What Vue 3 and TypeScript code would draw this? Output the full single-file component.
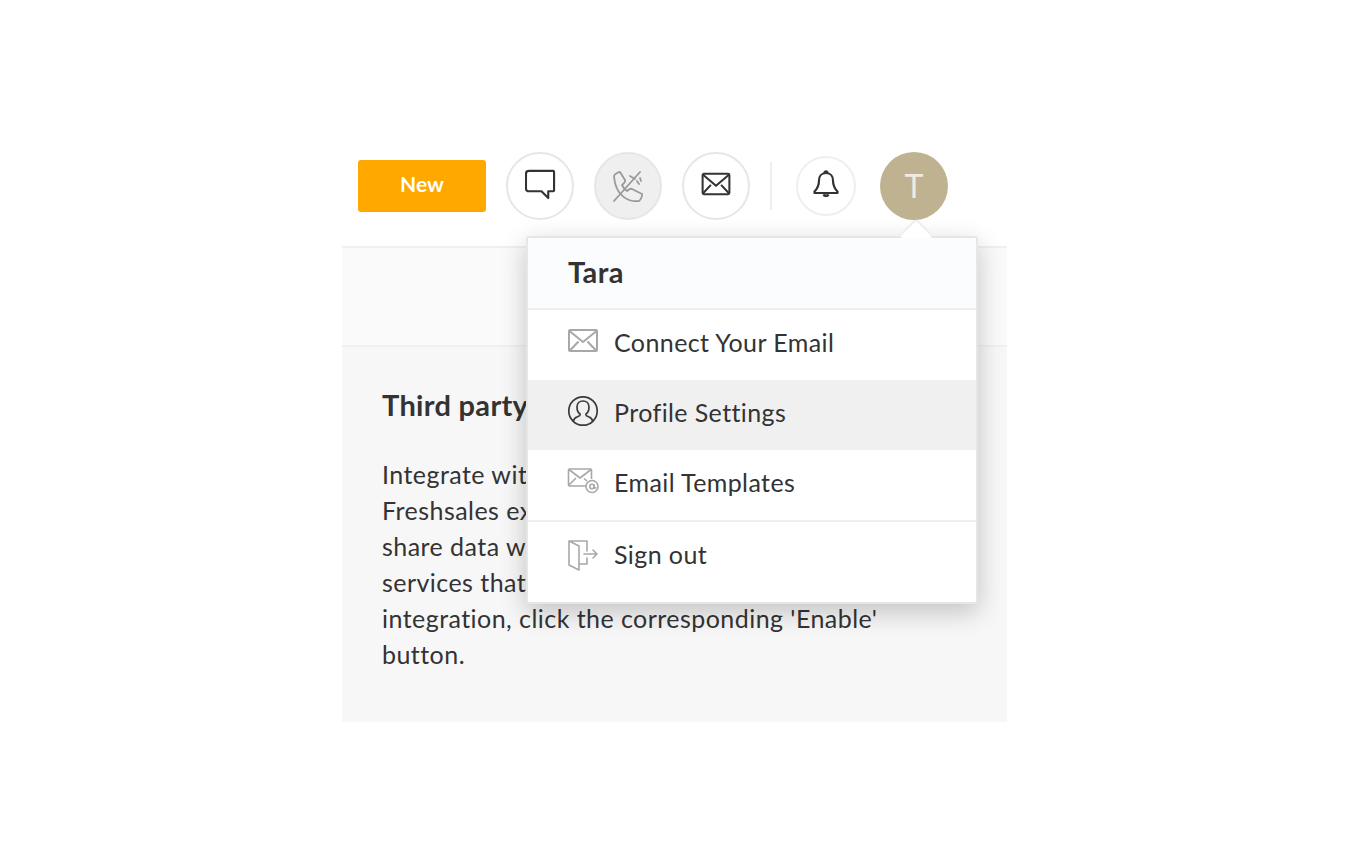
<script setup lang="ts">
const paragraph = [
  'Integrate with third-party apps to extend your',
  'Freshsales experience. These integrations',
  'share data with the tools and external',
  'services that you use. To enable an',
  "integration, click the corresponding 'Enable'",
  'button.',
]
</script>

<template>
  <div class="page">
    <div class="frame">
      <header class="toolbar">
        <button class="btn-new">New</button>
        <span class="circle">
          <svg class="tool-icon" width="31" height="31" viewBox="0 0 32 32" fill="none" stroke="#333" stroke-width="2.2" stroke-linejoin="round">
            <path d="M4 2h25a1 1 0 0 1 1 1v19a1 1 0 0 1-1 1h-5v7l-7-7H4a3 3 0 0 1-3-3V5a3 3 0 0 1 3-3z" />
          </svg>
        </span>
        <span class="circle circle-muted">
          <svg class="phone-icon" width="32" height="32" viewBox="0 0 32 32" fill="none" stroke="#999" stroke-width="1.8" stroke-linejoin="round" stroke-linecap="round">
            <path d="M2 6c0-1.500 4-4 6-4l5 8c.5 1-.5 3-3 5 1 2 3 5 5 6 2-2 4-2.500 5-2l10 5c.5 1-1 6-3 7-3 .5-7 0-10-1-7-3-14-10-15-24z" />
            <path d="M2 31 28 2" />
            <path d="M18 6l5 3M25 11l2 3M28 8l1 3" />
          </svg>
        </span>
        <span class="circle">
          <svg class="tool-icon" width="30" height="24" viewBox="0 0 32 26" fill="none" stroke="#333" stroke-width="2.2" stroke-linejoin="round">
            <rect x="1.500" y="2" width="29" height="22" rx="1.500" />
            <path d="M2 3l14 12L30 3M2 23l8.500-9M30 23l-8.500-9" />
          </svg>
        </span>
        <span class="divider"></span>
        <span class="circle circle-small">
          <svg class="tool-icon" width="26" height="28" viewBox="0 0 26 28" fill="none" stroke="#333" stroke-width="2.2" stroke-linejoin="round">
            <path d="M13 3c-4.500 0-7 3.500-7 7.500 0 5-1.500 8-4.500 11v1.500h23v-1.500c-3-3-4.500-6-4.500-11C20 6.500 17.500 3 13 3z" />
            <path d="M11.500 3c0-2.200 3-2.200 3 0" />
            <path d="M10.500 24.500c.8 2 4.200 2 5 0" fill="#333" />
          </svg>
        </span>
        <span class="avatar">T</span>
      </header>

      <div class="stripe"></div>

      <section class="content">
        <h2 class="title">Third party integrations</h2>
        <p class="text">
          <span v-for="line in paragraph" :key="line" class="line">{{ line }}</span>
        </p>
      </section>

      <div class="menu">
        <span class="caret"></span>
        <div class="menu-head">Tara</div>
        <div class="menu-row">
          <svg class="menu-icon" width="32" height="26" viewBox="0 0 32 26" fill="none" stroke="#a8a8a8" stroke-width="2" stroke-linejoin="round">
            <rect x="2" y="2" width="28" height="21" rx="1" />
            <path d="M2.500 3 16 14 29.500 3M3 22.500l8.500-9M29 22.500l-8.500-9" />
          </svg>
          <span>Connect Your Email</span>
        </div>
        <div class="menu-row is-active">
          <svg class="menu-icon" width="32" height="32" viewBox="0 0 32 32" fill="none" stroke="#3a3a3a" stroke-width="1.7" stroke-linejoin="round" stroke-linecap="round">
            <circle cx="16" cy="16" r="14.200" />
            <path d="M6.500 26c.3-2.500 2-3.500 4-4.200 1.500-.6 2.700-1.100 2.700-2.600-2-1.500-3.200-4-3.200-7C10 8.500 12.500 6 16 6s6 2.500 6 6.200c0 3-1.200 5.500-3.200 7 0 1.500 1.200 2 2.700 2.600 2 .7 3.700 1.700 4 4.200" />
          </svg>
          <span>Profile Settings</span>
        </div>
        <div class="menu-row">
          <svg class="menu-icon" width="32" height="26" viewBox="0 0 32 26" fill="none" stroke="#a8a8a8" stroke-width="1.6" stroke-linejoin="round">
            <path d="M19 18H2.500a1 1 0 0 1-1-1V2a1 1 0 0 1 1-1h21a1 1 0 0 1 1 1v9" />
            <path d="M2 1.500 13 10l11-8.500M2 17l7-7M17 10.500l3 2.500" />
            <circle cx="25" cy="18.500" r="6" />
            <circle cx="25" cy="18.500" r="2.200" />
            <path d="M27.200 16.500v3c0 1 1.500 1 1.500-.5" />
          </svg>
          <span>Email Templates</span>
        </div>
        <div class="menu-row menu-row-last">
          <svg class="menu-icon" width="32" height="32" viewBox="0 0 32 32" fill="none" stroke="#a8a8a8" stroke-width="1.6" stroke-linejoin="round" stroke-linecap="round">
            <path d="M20 12V2H2v24l10 5V7L2 2" />
            <path d="M12 25h8v-6" />
            <path d="M17 15h13M26 11l4 4-4 4" />
          </svg>
          <span>Sign out</span>
        </div>
      </div>
    </div>
  </div>
</template>

<style scoped>
.page {
  padding: 152px 0 0 342px;
  font-family: Lato, "Liberation Sans", sans-serif;
  color: #333;
}

.frame {
  position: relative;
  width: 665px;
}

.toolbar {
  display: flex;
  align-items: center;
  height: 68px;
  padding-left: 16px;
}

.btn-new {
  width: 128px;
  height: 52px;
  margin-right: 20px;
  padding: 0 0 5px;
  border: 0;
  border-radius: 3px;
  background: #ffa800;
  color: #fff;
  font: 700 21px Lato, sans-serif;
}

.circle {
  display: flex;
  align-items: center;
  justify-content: center;
  box-sizing: border-box;
  width: 68px;
  height: 68px;
  margin-right: 20px;
  border: 2px solid #e6e6e6;
  border-radius: 50%;
  background: #fff;
}

.circle-muted {
  background: #efefef;
}

.circle-small {
  width: 60px;
  height: 60px;
  margin-right: 24px;
  border-color: #efefef;
}

.tool-icon {
  margin-top: -4px;
}

.phone-icon {
  margin-top: -1px;
}

.divider {
  width: 2px;
  height: 48px;
  margin: 0 24px 0 0;
  background: #eee;
}

.avatar {
  position: relative;
  z-index: 1;
  display: flex;
  align-items: center;
  justify-content: center;
  width: 68px;
  height: 68px;
  padding-bottom: 2px;
  box-sizing: border-box;
  border-radius: 50%;
  background: #bfb291;
  color: #efebe0;
  font-size: 32px;
}

.stripe {
  box-sizing: border-box;
  height: 101px;
  margin-top: 26px;
  border-top: 2px solid #f0f0f0;
  border-bottom: 2px solid #f0f0f0;
  background: #fafafa;
}

.content {
  box-sizing: border-box;
  height: 375px;
  padding: 40px 40px 0;
  background: #f7f7f7;
}

.title {
  margin: 0;
  font-size: 29px;
  font-weight: 700;
  letter-spacing: 0.3px;
  line-height: 36px;
}

.text {
  margin: 33px 0 0;
  font-size: 25px;
  letter-spacing: 0.45px;
  line-height: 36px;
}

.line {
  display: block;
  white-space: nowrap;
}

.menu {
  position: absolute;
  top: 84px;
  left: 184px;
  box-sizing: border-box;
  width: 452px;
  border: 2px solid #e6e6e6;
  border-radius: 3px;
  background: #fff;
  box-shadow: 0 8px 26px rgba(0, 0, 0, 0.22);
  font-size: 25px;
  letter-spacing: 0.4px;
}

.caret {
  position: absolute;
  top: -15px;
  left: 376px;
  width: 24px;
  height: 24px;
  border-top: 2px solid #eee;
  border-left: 2px solid #eee;
  box-sizing: border-box;
  background: #fff;
  transform: rotate(45deg);
}

.menu-head {
  position: relative;
  box-sizing: border-box;
  height: 72px;
  padding-left: 40px;
  border-bottom: 2px solid #eee;
  background: #fbfcfe;
  font-size: 29px;
  font-weight: 700;
  line-height: 68px;
}

.menu-row {
  display: flex;
  align-items: center;
  gap: 15px;
  box-sizing: border-box;
  height: 70px;
  padding: 0 0 6px 39px;
}

.menu-row.is-active {
  background: #f0f0f0;
}

.menu-row-last {
  height: 82px;
  padding-bottom: 17px;
  border-top: 2px solid #eee;
}

.menu-row-last .menu-icon {
  margin-top: 2px;
}

.menu-icon {
  flex: none;
  margin-top: -2px;
}
</style>

<style>
html,
body {
  background: #fff;
}
</style>
